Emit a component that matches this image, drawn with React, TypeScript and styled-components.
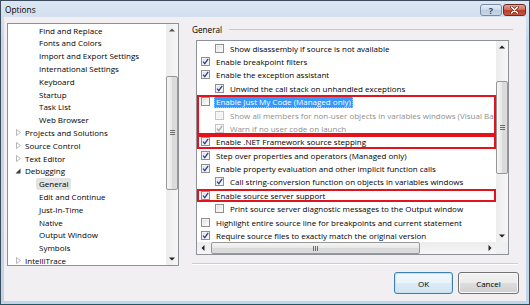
import React from "react";
import styled, { createGlobalStyle } from "styled-components";

const GlobalStyle = createGlobalStyle`
  html, body {
    margin: 0;
    padding: 0;
    background: #ffffff;
  }
  body {
    font-family: "Open Sans", "Noto Sans", sans-serif;
    font-size: 8px;
    color: #000;
  }
  * {
    box-sizing: border-box;
  }
`;

const Window = styled.div`
  width: 530px;
  height: 305px;
  border: 1px solid #3d4c5c;
  border-bottom-color: #1d5766;
  background: linear-gradient(#dae6f3, #c6d6e9 40px, #c3d4e8);
  padding: 0 3px 3px;
  display: flex;
  flex-direction: column;
`;

const TitleBar = styled.div`
  height: 16px;
  display: flex;
  align-items: center;
  padding-left: 1px;
`;

const Title = styled.span`
  flex: 1;
  font-size: 8.3px;
  color: #000;
`;

const CaptionButton = styled.div<{ $close?: boolean; $w: number }>`
  width: ${(p) => p.$w}px;
  height: 12px;
  margin-top: 2px;
  border: 1px solid ${(p) => (p.$close ? "#6b2a22" : "#7a8ca2")};
  border-radius: 3px;
  display: flex;
  align-items: center;
  justify-content: center;
  background: ${(p) =>
    p.$close
      ? "linear-gradient(#e2a594, #d0705c 45%, #bc3d2a 55%, #c9593f)"
      : "linear-gradient(#e6eef7, #cfdcea 45%, #bccde1 55%, #c9d8e8)"};
  color: #3a4a5c;
  font-size: 9px;
  font-weight: 700;
  line-height: 1;
  & + & {
    margin-left: 1px;
  }
`;

const Body = styled.div`
  flex: 1;
  background: #f1eff2;
  display: flex;
  padding: 6px 8px 0 3px;
  gap: 13px;
`;

/* ---------- tree ---------- */

const TreePanel = styled.div`
  width: 172px;
  height: 243px;
  border: 1px solid #8e9298;
  background: #fff;
  display: flex;
  overflow: hidden;
`;

const TreeItems = styled.div`
  flex: 1;
  padding-top: 0.2px;
  overflow: hidden;
`;

const TreeRow = styled.div<{ $level: number }>`
  height: 12.8px;
  display: flex;
  align-items: center;
  padding-left: ${(p) => 6 + p.$level * 14}px;
  white-space: nowrap;
`;

const Expander = styled.span`
  width: 8px;
  height: 8px;
  display: flex;
  align-items: center;
  justify-content: center;
`;

const TreeLabel = styled.span<{ $selected?: boolean }>`
  padding: 0 3px;
  line-height: 12px;
  border-radius: 2px;
  background: ${(p) => (p.$selected ? "#e3e3e3" : "transparent")};
`;

/* ---------- scrollbars ---------- */

const VScroll = styled.div`
  width: 12px;
  background: linear-gradient(90deg, #ececec, #f6f6f6);
  display: flex;
  flex-direction: column;
`;

const HScroll = styled.div`
  height: 12px;
  background: linear-gradient(#ececec, #f6f6f6);
  display: flex;
`;

const ArrowBtn = styled.div`
  width: 12px;
  height: 12px;
  flex: none;
  display: flex;
  align-items: center;
  justify-content: center;
`;

const Track = styled.div<{ $horizontal?: boolean }>`
  flex: 1;
  display: flex;
  flex-direction: ${(p) => (p.$horizontal ? "row" : "column")};
`;

const Thumb = styled.div<{ $horizontal?: boolean }>`
  border: 1px solid #979797;
  border-radius: 2px;
  display: flex;
  align-items: center;
  justify-content: center;
  background: ${(p) =>
    p.$horizontal
      ? "linear-gradient(#f5f5f5, #e8e8e8 50%, #d9d9d9 51%, #dcdcdc)"
      : "linear-gradient(90deg, #f5f5f5, #e8e8e8 50%, #d9d9d9 51%, #dcdcdc)"};
`;

const Corner = styled.div`
  background: #f0f0f0;
`;

/* ---------- right pane ---------- */

const RightPane = styled.div`
  flex: 1;
  display: flex;
  flex-direction: column;
`;

const GroupHeader = styled.div`
  height: 12px;
  display: flex;
  align-items: center;
  gap: 7px;
  margin-right: 5px;
  font-size: 8.2px;
`;

const HeaderLine = styled.div`
  flex: 1;
  height: 1px;
  background: #c9c7cb;
`;

const ListBox = styled.div`
  margin: 5px 9px 0 4px;
  height: 215px;
  border: 1px solid #8e9298;
  background: #fff;
  display: grid;
  grid-template-columns: 1fr 12px;
  grid-template-rows: 1fr 12px;
`;

const ListItems = styled.div`
  overflow: hidden;
  padding-top: 0.4px;
`;

const Marked = styled.div`
  outline: 2px solid #e4121c;
  outline-offset: -2px;
`;

const OptionRow = styled.div<{ $level: number; $disabled?: boolean }>`
  height: 13.4px;
  display: flex;
  align-items: center;
  padding-left: ${(p) => 4 + p.$level * 14}px;
  white-space: nowrap;
  color: ${(p) => (p.$disabled ? "#8f8f8f" : "#000")};
`;

const Box = styled.span<{ $disabled?: boolean }>`
  width: 9px;
  height: 9px;
  flex: none;
  margin-right: 4px;
  border: 1px solid ${(p) => (p.$disabled ? "#c4c4c4" : "#8e8f8f")};
  background: ${(p) =>
    p.$disabled
      ? "#f4f4f4"
      : "linear-gradient(135deg, #d9d9d9, #f3f3f3 60%, #ffffff)"};
  box-shadow: inset 0 0 0 1px ${(p) => (p.$disabled ? "#f7f7f7" : "#f4f4f4")};
  display: flex;
  align-items: center;
  justify-content: center;
`;

const OptionLabel = styled.span<{ $selected?: boolean }>`
  padding: 0 2px;
  line-height: 13px;
  background: ${(p) => (p.$selected ? "#3399ff" : "transparent")};
  color: ${(p) => (p.$selected ? "#fff" : "inherit")};
  outline: ${(p) => (p.$selected ? "1px dotted #9fcfff" : "none")};
  outline-offset: -1px;
`;

const Separator = styled.div`
  margin-top: 8px;
  height: 2px;
  border-top: 1px solid #cfcdd1;
  border-bottom: 1px solid #ffffff;
`;

const ButtonRow = styled.div`
  display: flex;
  justify-content: flex-end;
  gap: 5px;
  margin-top: 7px;
  margin-right: -1px;
`;

const DialogButton = styled.button<{ $default?: boolean; $w: number }>`
  width: ${(p) => p.$w}px;
  height: 22px;
  padding: 0;
  font-family: inherit;
  font-size: 8px;
  color: #000;
  border-radius: 3px;
  border: 1px solid ${(p) => (p.$default ? "#3c7fb1" : "#707070")};
  box-shadow: inset 0 0 0 1px ${(p) => (p.$default ? "#bfe4f8" : "#fbfbfb")};
  background: ${(p) =>
    p.$default
      ? "linear-gradient(#f3f9fd, #e9f3fa 50%, #dcebf5 51%, #d3e5f1)"
      : "linear-gradient(#f2f2f2, #ebebeb 50%, #dddddd 51%, #cfcfcf)"};
`;

/* ---------- small drawings ---------- */

const Arrow = ({ dir, color = "#222" }: { dir: "up" | "down" | "left" | "right"; color?: string }) => {
  const pts = {
    up: "1,4.5 4,1.5 7,4.5",
    down: "1,1.5 4,4.5 7,1.5",
    left: "4.5,1 1.5,4 4.5,7",
    right: "1.5,1 4.5,4 1.5,7",
  }[dir];
  const vertical = dir === "up" || dir === "down";
  return (
    <svg width={vertical ? 8 : 6} height={vertical ? 6 : 8} viewBox={vertical ? "0 0 8 6" : "0 0 6 8"}>
      <polygon points={pts} fill={color} />
    </svg>
  );
};

const Grip = ({ horizontal }: { horizontal?: boolean }) =>
  horizontal ? (
    <svg width="6" height="5" viewBox="0 0 6 5">
      <path d="M0.5 0v5M2.5 0v5M4.5 0v5" stroke="#6b6b6b" strokeWidth="1" />
    </svg>
  ) : (
    <svg width="5" height="6" viewBox="0 0 5 6">
      <path d="M0 0.5h5M0 2.5h5M0 4.5h5" stroke="#6b6b6b" strokeWidth="1" />
    </svg>
  );

const Tick = ({ disabled }: { disabled?: boolean }) => (
  <svg width="7" height="7" viewBox="0 0 7 7">
    <path
      d="M1 3.6 L2.8 5.6 L6.2 0.8"
      fill="none"
      stroke={disabled ? "#a9a9a9" : "#2b3f9c"}
      strokeWidth="1.3"
    />
  </svg>
);

const Triangle = ({ open }: { open?: boolean }) =>
  open ? (
    <svg width="6" height="6" viewBox="0 0 6 6">
      <polygon points="5.5,0.5 5.5,5.5 0.5,5.5" fill="#3c3c3c" />
    </svg>
  ) : (
    <svg width="5" height="7" viewBox="0 0 5 7">
      <polygon points="0.5,0.5 4.5,3.5 0.5,6.5" fill="#fff" stroke="#a6a6a6" strokeWidth="0.8" />
    </svg>
  );

const CloseGlyph = () => (
  <svg width="9" height="8" viewBox="0 0 9 8">
    <path d="M1.5 1 L7.5 7 M7.5 1 L1.5 7" stroke="#5a1c14" strokeWidth="2.8" strokeLinecap="round" />
    <path d="M1.5 1 L7.5 7 M7.5 1 L1.5 7" stroke="#ffffff" strokeWidth="1.6" strokeLinecap="round" />
  </svg>
);

/* ---------- data ---------- */

type TreeNode = { label: string; level: number; expander?: "open" | "closed"; selected?: boolean };

const treeNodes: TreeNode[] = [
  { label: "Find and Replace", level: 1 },
  { label: "Fonts and Colors", level: 1 },
  { label: "Import and Export Settings", level: 1 },
  { label: "International Settings", level: 1 },
  { label: "Keyboard", level: 1 },
  { label: "Startup", level: 1 },
  { label: "Task List", level: 1 },
  { label: "Web Browser", level: 1 },
  { label: "Projects and Solutions", level: 0, expander: "closed" },
  { label: "Source Control", level: 0, expander: "closed" },
  { label: "Text Editor", level: 0, expander: "closed" },
  { label: "Debugging", level: 0, expander: "open" },
  { label: "General", level: 1, selected: true },
  { label: "Edit and Continue", level: 1 },
  { label: "Just-In-Time", level: 1 },
  { label: "Native", level: 1 },
  { label: "Output Window", level: 1 },
  { label: "Symbols", level: 1 },
  { label: "IntelliTrace", level: 0, expander: "closed" },
];

type Option = {
  label: string;
  level: number;
  checked?: boolean;
  disabled?: boolean;
  selected?: boolean;
};

const before: Option[] = [
  { label: "Show disassembly if source is not available", level: 1 },
  { label: "Enable breakpoint filters", level: 0, checked: true },
  { label: "Enable the exception assistant", level: 0, checked: true },
  { label: "Unwind the call stack on unhandled exceptions", level: 1, checked: true },
];

const justMyCode: Option[] = [
  { label: "Enable Just My Code (Managed only)", level: 0, selected: true },
  {
    label: "Show all members for non-user objects in variables windows (Visual Basic only)",
    level: 1,
    disabled: true,
  },
  { label: "Warn if no user code on launch", level: 1, checked: true, disabled: true },
];

const netSource: Option = { label: "Enable .NET Framework source stepping", level: 0, checked: true };

const middle: Option[] = [
  { label: "Step over properties and operators (Managed only)", level: 0, checked: true },
  { label: "Enable property evaluation and other implicit function calls", level: 0, checked: true },
  { label: "Call string-conversion function on objects in variables windows", level: 1, checked: true },
];

const sourceServer: Option = { label: "Enable source server support", level: 0, checked: true };

const after: Option[] = [
  { label: "Print source server diagnostic messages to the Output window", level: 1 },
  { label: "Highlight entire source line for breakpoints and current statement", level: 0 },
  { label: "Require source files to exactly match the original version", level: 0, checked: true },
];

function OptionItem({ option }: { option: Option }) {
  return (
    <OptionRow $level={option.level} $disabled={option.disabled}>
      <Box $disabled={option.disabled}>{option.checked && <Tick disabled={option.disabled} />}</Box>
      <OptionLabel $selected={option.selected}>{option.label}</OptionLabel>
    </OptionRow>
  );
}

export default function App() {
  return (
    <>
      <GlobalStyle />
      <Window>
        <TitleBar>
          <Title>Options</Title>
          <CaptionButton $w={22}>?</CaptionButton>
          <CaptionButton $w={23} $close>
            <CloseGlyph />
          </CaptionButton>
        </TitleBar>
        <Body>
          <TreePanel>
            <TreeItems>
              {treeNodes.map((n) => (
                <TreeRow key={n.label} $level={n.level}>
                  <Expander>{n.expander && <Triangle open={n.expander === "open"} />}</Expander>
                  <TreeLabel $selected={n.selected}>{n.label}</TreeLabel>
                </TreeRow>
              ))}
            </TreeItems>
            <VScroll>
              <ArrowBtn>
                <Arrow dir="up" color="#555" />
              </ArrowBtn>
              <Track>
                <Thumb style={{ marginTop: 40, height: 114 }}>
                  <Grip />
                </Thumb>
              </Track>
              <ArrowBtn>
                <Arrow dir="down" />
              </ArrowBtn>
            </VScroll>
          </TreePanel>

          <RightPane>
            <GroupHeader>
              <span>General</span>
              <HeaderLine />
            </GroupHeader>
            <ListBox>
              <ListItems>
                {before.map((o) => (
                  <OptionItem key={o.label} option={o} />
                ))}
                <Marked>
                  {justMyCode.map((o) => (
                    <OptionItem key={o.label} option={o} />
                  ))}
                </Marked>
                <Marked>
                  <OptionItem option={netSource} />
                </Marked>
                {middle.map((o) => (
                  <OptionItem key={o.label} option={o} />
                ))}
                <Marked>
                  <OptionItem option={sourceServer} />
                </Marked>
                {after.map((o) => (
                  <OptionItem key={o.label} option={o} />
                ))}
              </ListItems>
              <VScroll>
                <ArrowBtn>
                  <Arrow dir="up" />
                </ArrowBtn>
                <Track>
                  <Thumb style={{ marginTop: 28, height: 93 }}>
                    <Grip />
                  </Thumb>
                </Track>
                <ArrowBtn>
                  <Arrow dir="down" />
                </ArrowBtn>
              </VScroll>
              <HScroll>
                <ArrowBtn>
                  <Arrow dir="left" />
                </ArrowBtn>
                <Track $horizontal>
                  <Thumb $horizontal style={{ marginLeft: 2, width: 209 }}>
                    <Grip horizontal />
                  </Thumb>
                </Track>
                <ArrowBtn>
                  <Arrow dir="right" />
                </ArrowBtn>
              </HScroll>
              <Corner />
            </ListBox>
            <Separator />
            <ButtonRow>
              <DialogButton $default $w={59}>
                OK
              </DialogButton>
              <DialogButton $w={61}>Cancel</DialogButton>
            </ButtonRow>
          </RightPane>
        </Body>
      </Window>
    </>
  );
}
